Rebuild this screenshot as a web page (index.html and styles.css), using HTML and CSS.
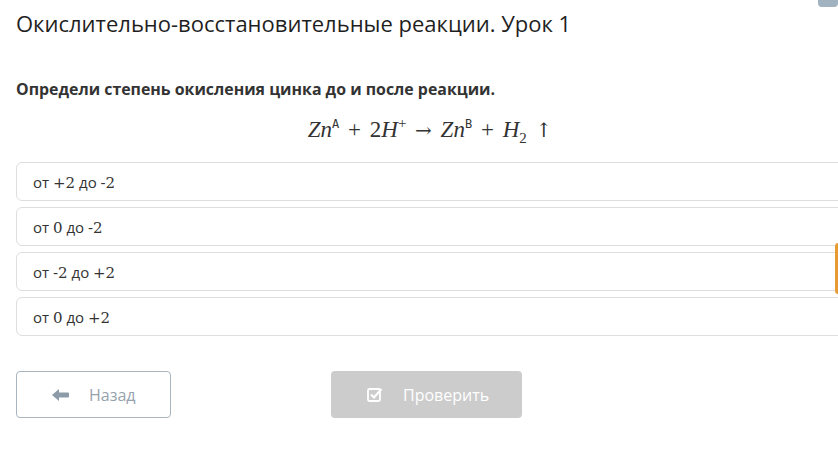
FILE: index.html
```html
<!DOCTYPE html>
<html lang="ru">
<head>
    <meta charset="UTF-8">
    <meta name="viewport" content="width=device-width, initial-scale=1.0">
    <title>Окислительно-восстановительные реакции. Урок 1</title>
    <link rel="stylesheet" href="styles.css">
</head>
<body>
    <div class="corner-tab"></div>
    <div class="side-tab"></div>

    <h1 class="lesson-title">Окислительно-восстановительные реакции. Урок 1</h1>

    <p class="question">Определи степень окисления цинка до и после реакции.</p>

    <div class="formula">
        <span class="mi">Zn</span><sup class="sup-text">A</sup>
        <span class="op">+</span>
        <span class="mn">2</span><span class="mi">H</span><sup>+</sup>
        <span class="op arrow">&rarr;</span>
        <span class="mi">Zn</span><sup class="sup-text">B</sup>
        <span class="op">+</span>
        <span class="mi">H</span><sub>2</sub>
        <span class="op arrow">&uarr;&#xFE0E;</span>
    </div>

    <div class="options">
        <div class="option"><span>от <span class="num">+2</span> до <span class="num">-2</span></span></div>
        <div class="option"><span>от <span class="num">0</span> до <span class="num">-2</span></span></div>
        <div class="option"><span>от <span class="num">-2</span> до <span class="num">+2</span></span></div>
        <div class="option"><span>от <span class="num">0</span> до <span class="num">+2</span></span></div>
    </div>

    <div class="actions">
        <button class="btn btn-back">
            <svg class="btn-icon" width="17" height="12" viewBox="0 0 17 12">
                <path d="M0 6 L7 0 L7 3.5 L16 3.5 Q17 3.5 17 4.5 L17 7.5 Q17 8.5 16 8.5 L7 8.5 L7 12 Z" fill="#8c9ba7"/>
            </svg>
            <span>Назад</span>
        </button>
        <button class="btn btn-check" disabled>
            <svg class="btn-icon" width="16" height="15" viewBox="0 0 16 15">
                <rect x="1" y="2" width="12" height="12" rx="1.5" fill="none" stroke="#fff" stroke-width="1.8"/>
                <path d="M4 7.5 L7 10.5 L14.5 2" fill="none" stroke="#fff" stroke-width="2.2"/>
            </svg>
            <span>Проверить</span>
        </button>
    </div>
</body>
</html>
```

FILE: styles.css
```css
body {
    font-family: "Open Sans", sans-serif;
    background-color: #fff;
    color: #222;
    margin: 0;
    padding: 0 0 0 16px;
    overflow: hidden;
    width: 822px;
    height: 473px;
    position: relative;
}

.corner-tab {
    position: absolute;
    top: -6px;
    right: 0;
    width: 20px;
    height: 13px;
    background: #a1b2c1;
    border-radius: 4px;
}

.side-tab {
    position: absolute;
    top: 243px;
    right: -4px;
    width: 7px;
    height: 51px;
    background: #e69b33;
    border-radius: 4px;
}

.lesson-title {
    font-size: 22px;
    font-weight: 400;
    margin: 0;
    padding-top: 8px;
    line-height: 30px;
    color: #1f1f1f;
}

.question {
    font-size: 15.9px;
    font-weight: 700;
    color: #333;
    margin: 40px 0 0;
    line-height: 22px;
}

.formula {
    font-family: "Liberation Serif", serif;
    font-size: 23px;
    color: #333;
    text-align: center;
    margin: 16px 0 0 -16px;
    width: 838px;
    padding-left: 26px;
    box-sizing: border-box;
    line-height: 28px;
    word-spacing: -1px;
}

.formula .mi {
    font-style: italic;
}

.formula .op {
    margin: 0 4px;
}

.formula .arrow {
    font-family: "DejaVu Serif", serif;
    font-size: 20px;
    font-variant-emoji: text;
}

.formula sup,
.formula sub {
    font-size: 15px;
    line-height: 0;
}

.formula .sup-text {
    font-family: "DejaVu Sans Mono", monospace;
    font-size: 12px;
}

.options {
    margin-top: 18px;
    display: flex;
    flex-direction: column;
    gap: 6px;
    width: 880px;
}

.option {
    border: 1px solid #dedede;
    border-radius: 6px;
    box-sizing: border-box;
    height: 39px;
    padding-left: 16px;
    display: flex;
    align-items: center;
    font-size: 15px;
    color: #333;
    font-family: "Open Sans", sans-serif;
}

.option .num {
    font-family: "DejaVu Serif", serif;
    font-size: 15px;
}

.actions {
    margin-top: 35px;
    display: flex;
    gap: 160px;
}

.btn {
    height: 47px;
    border-radius: 4px;
    font-family: "Open Sans", sans-serif;
    font-size: 16px;
    display: flex;
    align-items: center;
    padding: 0;
}

.btn-back {
    width: 155px;
    background: #fff;
    border: 1px solid #a9b6bf;
    color: #97a3ac;
    padding-left: 35px;
    gap: 20px;
}

.btn-check {
    width: 191px;
    background: #cccccc;
    border: none;
    color: #fff;
    padding-left: 36px;
    gap: 20px;
}
```
